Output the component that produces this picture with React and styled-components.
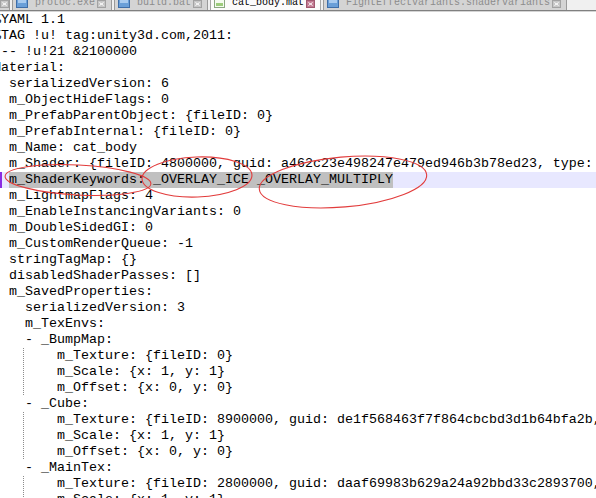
import React from "react";
import styled, { createGlobalStyle } from "styled-components";

const GlobalStyle = createGlobalStyle`
  html, body { margin: 0; padding: 0; background: #ffffff; overflow: hidden; }
  #root { width: 596px; height: 498px; }
`;

const Window = styled.div`
  position: relative;
  width: 596px;
  height: 498px;
  overflow: hidden;
  display: flex;
  flex-direction: column;
  background: #ffffff;
`;

const TabBar = styled.div`
  height: 10px;
  flex: none;
  display: flex;
  align-items: flex-end;
  gap: 2px;
  overflow: hidden;
  background: #f0f0f0;
  border-bottom: 1px solid #808080;
`;

const Tab = styled.div`
  flex: none;
  height: 18px;
  box-sizing: border-box;
  display: flex;
  align-items: flex-end;
  gap: ${(p) => p.$gap ?? 7}px;
  padding: 0 ${(p) => p.$pr ?? 5}px 2px ${(p) => p.$pl ?? 3}px;
  width: ${(p) => (p.$w ? `${p.$w}px` : "auto")};
  background: ${(p) => (p.$active ? "#fbfbfb" : "#d4d4d4")};
  border: 1px solid ${(p) => (p.$active ? "#a8a8a8" : "#9a9a9a")};
  border-bottom: none;
  color: ${(p) => (p.$active ? "#000000" : "#8c8c8c")};
  font-family: "Liberation Mono", "DejaVu Sans Mono", monospace;
  font-size: 10px;
  line-height: 10px;
  white-space: nowrap;
`;

const TabLabel = styled.span`
  display: block;
  margin-bottom: 0px;
`;

const CloseBox = styled.span`
  flex: none;
  width: 9px;
  height: 8px;
  box-sizing: border-box;
  display: flex;
  align-items: center;
  justify-content: center;
  background: ${(p) => (p.$active ? "#c27a92" : "#c6c6c6")};
  border: 1px solid ${(p) => (p.$active ? "#a05870" : "#a2a2a2")};
  margin-left: ${(p) => p.$ml ?? 0}px;
`;

const Editor = styled.div`
  position: relative;
  flex: 1;
  display: flex;
  flex-direction: column;
  border-top: 1px solid #d4d4d4;
  font-family: "Liberation Mono", "Courier New", monospace;
  font-size: 13.33px;
  line-height: 16px;
  color: #000000;
`;

const Line = styled.div`
  position: relative;
  height: 16px;
  flex: none;
  white-space: pre;
  overflow: hidden;
  background: ${(p) => (p.$current ? "#e8e8ff" : "transparent")};
`;

const LineText = styled.span`
  display: block;
  margin-left: -7px;
  white-space: pre;
`;

const Selected = styled.span`
  display: inline-block;
  height: 16px;
  background: #c0c0c0;
`;

const Guide = styled.span`
  position: absolute;
  left: 23px;
  top: 0;
  width: 1px;
  height: 16px;
  background-image: linear-gradient(to bottom, #8c8c8c 50%, transparent 50%);
  background-size: 1px 2px;
`;

const Caret = styled.span`
  position: absolute;
  left: 0;
  top: 0;
  width: 2px;
  height: 16px;
  background: #8a2be2;
  z-index: 1;
`;

const Annotations = styled.svg`
  position: absolute;
  left: 0;
  top: 0;
  pointer-events: none;
`;

const FileIcon = ({ active }) =>
  active ? (
    <svg width="11" height="12" viewBox="0 0 11 12">
      <rect x="0.5" y="0.5" width="10" height="11" fill="#f4fbf0" stroke="#8aa880" />
      <rect x="2" y="7" width="7" height="3" fill="#9ccc7c" />
    </svg>
  ) : (
    <svg width="12" height="12" viewBox="0 0 12 12">
      <rect x="0.5" y="0.5" width="11" height="11" fill="#6a9fd8" stroke="#3f6ea8" />
      <rect x="2" y="2" width="8" height="5" fill="#a9cbef" />
    </svg>
  );

const CloseX = () => (
  <svg width="5" height="4" viewBox="0 0 5 4">
    <path d="M0.5 0.5 L4.5 3.5 M4.5 0.5 L0.5 3.5" stroke="#ffffff" strokeWidth="1" />
  </svg>
);

const tabs = [
  { label: "protoc.exe" },
  { label: "build.bat" },
  { label: "cat_body.mat", active: true },
  { label: "FightEffectVariants.shadervariants" },
];

const lines = [
  "%YAML 1.1",
  "%TAG !u! tag:unity3d.com,2011:",
  "--- !u!21 &2100000",
  "Material:",
  "  serializedVersion: 6",
  "  m_ObjectHideFlags: 0",
  "  m_PrefabParentObject: {fileID: 0}",
  "  m_PrefabInternal: {fileID: 0}",
  "  m_Name: cat_body",
  "  m_Shader: {fileID: 4800000, guid: a462c23e498247e479ed946b3b78ed23, type: 3}",
  "SELECTED",
  "  m_LightmapFlags: 4",
  "  m_EnableInstancingVariants: 0",
  "  m_DoubleSidedGI: 0",
  "  m_CustomRenderQueue: -1",
  "  stringTagMap: {}",
  "  disabledShaderPasses: []",
  "  m_SavedProperties:",
  "    serializedVersion: 3",
  "    m_TexEnvs:",
  "    - _BumpMap:",
  "        m_Texture: {fileID: 0}",
  "        m_Scale: {x: 1, y: 1}",
  "        m_Offset: {x: 0, y: 0}",
  "    - _Cube:",
  "        m_Texture: {fileID: 8900000, guid: de1f568463f7f864cbcbd3d1b64bfa2b, type: 3}",
  "        m_Scale: {x: 1, y: 1}",
  "        m_Offset: {x: 0, y: 0}",
  "    - _MainTex:",
  "        m_Texture: {fileID: 2800000, guid: daaf69983b629a24a92bbd33c2893700, type: 3}",
  "        m_Scale: {x: 1, y: 1}",
];

export default function App() {
  return (
    <>
      <GlobalStyle />
      <Window>
        <TabBar>
          <Tab $w={11} $pl={0} $pr={0} style={{ marginLeft: -1 }}>
            <CloseBox>
              <CloseX />
            </CloseBox>
          </Tab>
          {tabs.map((t) => (
            <Tab key={t.label} $active={t.active}>
              <FileIcon active={t.active} />
              <TabLabel>{t.label}</TabLabel>
              <CloseBox $active={t.active} $ml={-5}>
                <CloseX />
              </CloseBox>
            </Tab>
          ))}
        </TabBar>
        <Editor>
          {lines.map((l, i) => {
            const guide = l.startsWith("        ");
            if (l === "SELECTED") {
              return (
                <Line key={i} $current>
                  <Caret />
                  <LineText>
                    {"  "}
                    <Selected>m_ShaderKeywords: _OVERLAY_ICE _OVERLAY_MULTIPLY</Selected>
                  </LineText>
                </Line>
              );
            }
            return (
              <Line key={i}>
                {guide && <Guide />}
                <LineText>{l}</LineText>
              </Line>
            );
          })}
        </Editor>
        <Annotations width="596" height="498" viewBox="0 0 596 498">
          <g fill="none" stroke="#e23c3c" strokeWidth="1.1">
            <ellipse cx="78" cy="180" rx="73" ry="15" transform="rotate(3 78 180)" />
            <ellipse cx="197" cy="177" rx="55" ry="20" transform="rotate(-2 197 177)" />
            <ellipse cx="343" cy="182" rx="84" ry="25" transform="rotate(-5 343 182)" />
          </g>
        </Annotations>
      </Window>
    </>
  );
}
